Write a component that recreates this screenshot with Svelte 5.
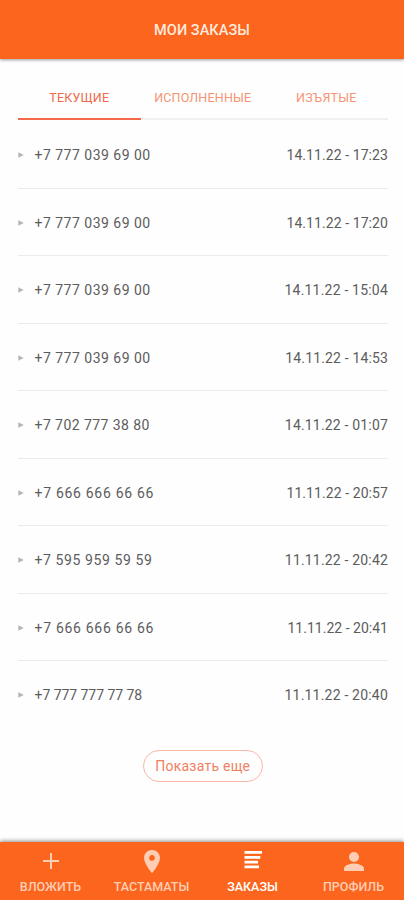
<script lang="ts">
	interface Order {
		phone: string;
		date: string;
		phoneSpacing: number;
		dateSpacing: number;
	}

	let activeTab = $state(0);

	const tabs = ['ТЕКУЩИЕ', 'ИСПОЛНЕННЫЕ', 'ИЗЪЯТЫЕ'];

	const orders: Order[] = [
		{ phone: '+7 777 039 69 00', date: '14.11.22 - 17:23', phoneSpacing: 0.49, dateSpacing: 0.08 },
		{ phone: '+7 777 039 69 00', date: '14.11.22 - 17:20', phoneSpacing: 0.49, dateSpacing: 0.08 },
		{ phone: '+7 777 039 69 00', date: '14.11.22 - 15:04', phoneSpacing: 0.49, dateSpacing: 0.2 },
		{ phone: '+7 777 039 69 00', date: '14.11.22 - 14:53', phoneSpacing: 0.49, dateSpacing: 0.15 },
		{ phone: '+7 702 777 38 80', date: '14.11.22 - 01:07', phoneSpacing: 0.44, dateSpacing: 0.18 },
		{ phone: '+7 666 666 66 66', date: '11.11.22 - 20:57', phoneSpacing: 0.7, dateSpacing: 0.08 },
		{ phone: '+7 595 959 59 59', date: '11.11.22 - 20:42', phoneSpacing: 0.6, dateSpacing: 0.18 },
		{ phone: '+7 666 666 66 66', date: '11.11.22 - 20:41', phoneSpacing: 0.7, dateSpacing: 0.02 },
		{ phone: '+7 777 777 77 78', date: '11.11.22 - 20:40', phoneSpacing: -0.05, dateSpacing: 0.2 }
	];
</script>

<div class="screen">
	<header class="header">
		<h1 class="header__title">МОИ ЗАКАЗЫ</h1>
	</header>

	<main class="content">
		<div class="tabs">
			{#each tabs as tab, i}
				<button class="tab" class:tab--active={activeTab === i} onclick={() => (activeTab = i)}>{tab}</button>
			{/each}
		</div>

		<ul class="orders">
			{#each orders as order}
				<li class="order">
					<svg class="order__arrow" viewBox="0 0 6 6"><path d="M0.3 0.3 5.7 3 0.3 5.7z" /></svg>
					<span class="order__phone" style="letter-spacing: {order.phoneSpacing}px">{order.phone}</span>
					<span class="order__date" style="letter-spacing: {order.dateSpacing}px">{order.date}</span>
				</li>
			{/each}
		</ul>

		<button class="more">Показать еще</button>
	</main>

	<nav class="nav">
		<a class="nav__item" href="#add">
			<svg class="nav__icon" viewBox="0 0 24 24"><path d="M11 4h2v7h7v2h-7v7h-2v-7H4v-2h7z" /></svg>
			<span class="nav__label">ВЛОЖИТЬ</span>
		</a>
		<a class="nav__item" href="#map">
			<svg class="nav__icon" viewBox="0 0 24 24">
				<path d="M12 1C7.6 1 4 4.5 4 8.9 4 14.8 12 24 12 24s8-9.2 8-15.1C20 4.5 16.4 1 12 1zm0 10.7a2.800 2.800 0 1 1 0-5.600 2.800 2.800 0 0 1 0 5.600z" />
			</svg>
			<span class="nav__label">ТАСТАМАТЫ</span>
		</a>
		<a class="nav__item nav__item--active" href="#orders">
			<svg class="nav__icon" viewBox="0 0 24 24">
				<path d="M3.500 2H21v2.700H3.500zM3.500 7H19.300v2.700H3.500zM3.500 11.700H17v2.700H3.500zM3.500 16.500H18v2.700H3.500z" />
			</svg>
			<span class="nav__label">ЗАКАЗЫ</span>
		</a>
		<a class="nav__item" href="#profile">
			<svg class="nav__icon" viewBox="0 0 24 24">
				<circle cx="12" cy="8" r="5" />
				<path d="M2 22v-2.400C2 16.200 8.600 14.600 12 14.600s10 1.600 10 5V22z" />
			</svg>
			<span class="nav__label">ПРОФИЛЬ</span>
		</a>
	</nav>
</div>

<style>
	:global(body) {
		background: #fff;
	}
	.screen {
		display: flex;
		flex-direction: column;
		height: 900px;
		overflow: hidden;
		background: #fefefe;
		font-family: Roboto, "Liberation Sans", sans-serif;
	}
	.header {
		display: flex;
		align-items: center;
		justify-content: center;
		flex: none;
		height: 59px;
		padding-top: 2px;
		box-sizing: border-box;
		background: #fb651e;
		box-shadow: 0 1px 3px rgba(0, 0, 0, .4);
	}
	.header__title {
		margin: 0;
		color: #ffeade;
		font-size: 14.5px;
		font-weight: 500;
		letter-spacing: 0.05px;
	}
	.content {
		flex: 1;
		padding: 17px 16px 0 17.5px;
	}
	.tabs {
		display: grid;
		grid-template-columns: repeat(3, 1fr);
		height: 44px;
		box-shadow: inset 0 -2px #f1f1f1;
	}
	.tab {
		padding: 0;
		border: 0;
		border-bottom: 2px solid transparent;
		background: none;
		color: #f59474;
		font: 400 12.5px Roboto, "Liberation Sans", sans-serif;
		letter-spacing: 0.2px;
		white-space: nowrap;
	}
	.tab--active {
		border-bottom-color: #f3694a;
		color: #f0674a;
	}
	.orders {
		margin: 1px 0 0;
		padding: 0;
		list-style: none;
	}
	.order {
		display: flex;
		align-items: center;
		height: 67.5px;
		padding-top: 2px;
		box-sizing: border-box;
		border-bottom: 1.5px solid #ebebeb;
		color: #5c5c5c;
		font-size: 14px;
	}
	.order:last-child {
		border-bottom-color: transparent;
	}
	.order__arrow {
		width: 6px;
		height: 6px;
		margin-right: 11px;
		fill: #b4b4b4;
	}
	.order__date {
		margin-left: auto;
	}
	.more {
		display: block;
		width: 120px;
		height: 32px;
		margin: 21px auto 0;
		padding: 0;
		border: 1px solid #f9b9a6;
		border-radius: 16px;
		background: none;
		color: #f07f62;
		font: 400 14px Roboto, "Liberation Sans", sans-serif;
		letter-spacing: 0.25px;
	}
	.nav {
		display: grid;
		grid-template-columns: repeat(4, 1fr);
		flex: none;
		height: 58px;
		background: #fb651e;
		box-shadow: 0 -1px 4px rgba(0, 0, 0, .45);
	}
	.nav__item {
		display: flex;
		flex-direction: column;
		align-items: center;
		padding-top: 7px;
		color: #ffcdb4;
		text-decoration: none;
	}
	.nav__item--active {
		color: #fff;
	}
	.nav__icon {
		width: 24px;
		height: 24px;
		fill: currentColor;
	}
	.nav__label {
		margin-top: 6px;
		font-size: 12.5px;
		font-weight: 500;
		line-height: 15px;
	}
</style>
